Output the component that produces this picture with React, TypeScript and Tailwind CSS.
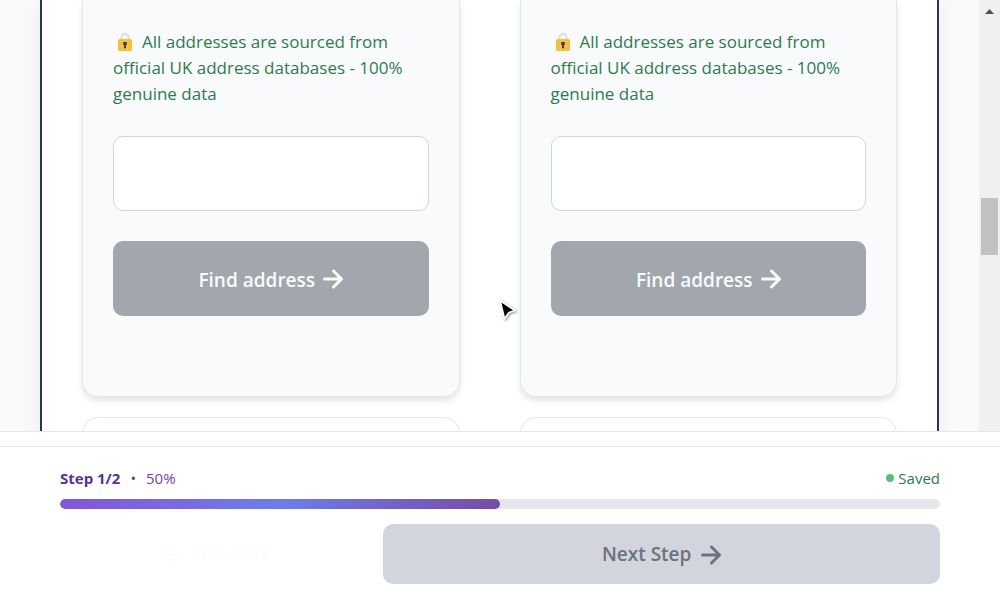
import React from "react";

function Arrow({ className, left = false }: { className: string; left?: boolean }) {
  return (
    <svg viewBox="0 0 20 20" className={className} fill="none" stroke="currentColor" strokeWidth="3" strokeLinecap="round" strokeLinejoin="round" aria-hidden="true">
      {left ? <path d="M18.500 10H2.500M9.500 2 1.500 10l8 8" /> : <path d="M1.500 10h16M10.500 2l8 8-8 8" />}
    </svg>
  );
}

function Lock() {
  return (
    <svg viewBox="0 0 16 18" className="mr-[9px] ml-1 inline-block h-[18px] w-4 align-[-3px]" aria-hidden="true">
      <path d="M4.500 7V4.500a3.500 3.500 0 0 1 7 0V7" fill="none" stroke="#d9d9d9" strokeWidth="1.800" />
      <rect x="1" y="6" width="14" height="12" rx="1.500" fill="#f2c23c" />
      <path d="M6.200 9h3.600v3H9v3.200H7V12h-.800Z" fill="#433b5d" />
    </svg>
  );
}

function AddressCard({ id }: { id: string }) {
  return (
    <section className="rounded-b-2xl border border-t-0 border-gray-200 bg-[#f9fafc] px-[30px] pt-[29px] pb-20 shadow-[0_4px_6px_rgba(0,0,0,0.10)]">
      <p className="text-[17px] leading-[26px] font-medium text-[#2f7a4d]">
        <Lock />
        All addresses are sourced from official UK address databases - 100% genuine data
      </p>
      <input
        id={id}
        type="text"
        aria-label="Address"
        className="mt-[29px] block h-[75px] w-full rounded-[10px] border border-gray-300 bg-white px-5 text-lg outline-none"
      />
      <button
        type="button"
        className="mt-[30px] flex h-[75px] w-full items-center justify-center gap-2 rounded-[10px] bg-[#a2a7ae] pt-[3px] text-[19px] font-semibold text-[#fafbfc]"
      >
        Find address
        <Arrow className="mb-[3px] size-5" />
      </button>
    </section>
  );
}

export default function App() {
  return (
    <div className="flex h-screen flex-col overflow-hidden bg-white font-['Open_Sans','Noto_Sans',sans-serif]">
      <div className="flex min-h-0 flex-1 overflow-hidden">
        <div className="min-w-0 flex-1 bg-[#f9fafc] px-10">
          <main className="min-h-full border-x-2 border-[#2d3748] bg-white px-10 shadow-[0_0_20px_rgba(0,0,0,0.06)]">
            <div className="grid grid-cols-2 gap-x-[60px] gap-y-5">
              <AddressCard id="current-address" />
              <AddressCard id="previous-address" />
              <section className="h-40 rounded-2xl border border-gray-200 bg-white" />
              <section className="h-40 rounded-2xl border border-gray-200 bg-white" />
            </div>
          </main>
        </div>
        <div className="flex w-[21px] shrink-0 flex-col items-center bg-[#f0f0f0] pt-[9px]" aria-hidden="true">
          <svg viewBox="0 0 9 5" className="h-[5px] w-[9px]" fill="#505050">
            <path d="M0 5 4.500 0 9 5Z" />
          </svg>
          <div className="mt-[184px] h-[57px] w-[17px] bg-[#c1c1c1]" />
        </div>
      </div>

      <footer className="shrink-0 border-t border-gray-200 bg-white pt-[14px]">
        <div className="border-t border-gray-200 px-[60px] pt-[19px] pb-5">
          <div className="flex items-center justify-between text-[15px] leading-6">
            <div className="flex items-center gap-[10px]">
              <span className="font-bold text-[#553399]">Step 1/2</span>
              <span className="text-[#4a5568]">•</span>
              <span className="text-[#7040c0]">50%</span>
            </div>
            <div className="flex items-center gap-1 font-medium text-[#2f7a4d]">
              <span className="size-2 rounded-full bg-[#5dbb7b]" />
              Saved
            </div>
          </div>
          <div role="progressbar" aria-label="Progress" aria-valuenow={50} className="mt-[9px] h-[10px] overflow-hidden rounded-full bg-[#e5e6ea]">
            <div className="h-full w-1/2 rounded-full bg-[linear-gradient(135deg,#8455d4_0%,#6f7cec_50%,#764ba2_100%)]" />
          </div>
          <div className="mt-[15px] grid grid-cols-[1fr_1.8fr] gap-[14px] text-[19px] font-semibold">
            <button type="button" disabled className="flex h-[60px] items-center justify-center gap-[10px] rounded-[10px] text-[#fcfdfd]">
              <Arrow left className="size-5" />
              Previous
            </button>
            <button type="button" className="flex h-[60px] items-center justify-center gap-[10px] rounded-[10px] bg-[#d2d5dd] pt-px text-[#6b7280]">
              Next Step
              <Arrow className="size-5" />
            </button>
          </div>
        </div>
      </footer>

      <svg viewBox="0 0 20 24" className="pointer-events-none absolute top-[298px] left-[497px] h-6 w-5 drop-shadow-[1px_1px_1px_rgba(0,0,0,0.4)]" aria-hidden="true">
        <path d="M3 2.500 18 12.500 12 14.500 7.500 21Z" fill="#000" stroke="#fff" strokeWidth="1.800" strokeLinejoin="round" />
      </svg>
    </div>
  );
}
